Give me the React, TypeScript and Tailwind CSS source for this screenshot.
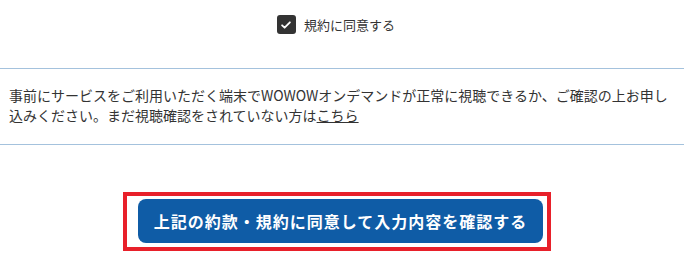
import React from "react";

const font = { fontFamily: '"Noto Sans CJK JP", "Noto Sans", sans-serif' };

const CheckIcon = () => (
  <svg viewBox="0 0 20 20" className="w-[12px] h-[12px]" fill="none">
    <path d="M3.5 10.5l4.2 4 8.8-9" stroke="white" strokeWidth="3" strokeLinecap="round" strokeLinejoin="round" />
  </svg>
);

export default function App() {
  return (
    <div className="w-[684px] h-[253px] bg-white text-[#333] overflow-hidden" style={font}>
      {/* agree checkbox */}
      <div className="h-[68px] flex justify-center pt-[15px]">
        <label className="flex items-start gap-[8px] ml-[-12px]">
          <span className="w-[19px] h-[19px] rounded-[3px] bg-[#333] flex items-center justify-center">
            <CheckIcon />
          </span>
          <span className="text-[13px] leading-[19px]">規約に同意する</span>
        </label>
      </div>

      {/* notice */}
      <div className="border-y border-[#a4c2dd] px-[9px] pt-[17px] pb-[19px]">
        <p className="text-[14px] leading-[19.6px] text-[#333]">
          事前にサービスをご利用いただく端末でWOWOWオンデマンドが正常に視聴できるか、ご確認の上お申し込みください。まだ視聴確認をされていない方は
          <a className="underline">こちら</a>
        </p>
      </div>

      {/* submit */}
      <div className="flex justify-center pt-[54px]">
        <div className="relative ml-[-3px]">
          <button className="w-[405px] h-[44px] rounded-[8px] bg-[#0f5ca6] text-white text-[16px] font-bold tracking-[1px] flex items-center justify-center">
            上記の約款・規約に同意して入力内容を確認する
          </button>
          <div className="absolute -left-[15px] -right-[8px] -top-[7px] -bottom-[8px] border-4 border-[#e8202a] pointer-events-none" />
        </div>
      </div>
    </div>
  );
}
